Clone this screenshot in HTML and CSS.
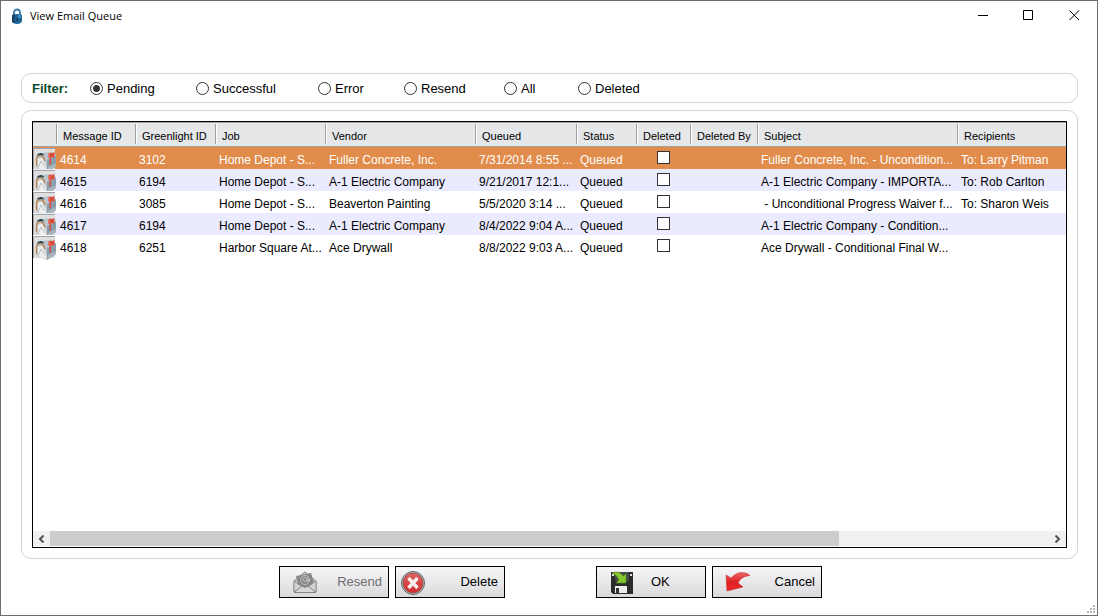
FILE: index.html
```
<!DOCTYPE html>
<html lang="en">
<head>
<meta charset="utf-8">
<title>View Email Queue</title>
<link rel="stylesheet" href="styles.css">
</head>
<body>
<svg class="defs" aria-hidden="true">
  <symbol id="mailbox" viewBox="0 0 24 26">
    <path d="M0 0H22V22H0Z" fill="#e0e0e1"/>
    <path d="M0.500 22V0.500H22" fill="none" stroke="#a3a3a6"/>
    <path d="M8 5L19 4L23 7V18L14 24L11 14Z" fill="#b9c6cf"/>
    <path d="M14 12L23 8V18L14 24Z" fill="#8b9dab"/>
    <path d="M15 19L23 15V18L14 24Z" fill="#a9b6c0"/>
    <path d="M3 9Q4 6 8 6Q12 7 13 11L14 24L3 20Z" fill="#c5cacd"/>
    <path d="M5 11L9 9.500L13 18V23L5 20Z" fill="#eceeef"/>
    <path d="M5 20L8 13L12 19" fill="none" stroke="#a9b2b8" stroke-width="0.800"/>
    <path d="M3.500 18V10.500Q4.500 7 8 7.500Q10.500 8.500 12 13" fill="none" stroke="#b98756" stroke-width="1.400"/>
    <path d="M3.500 7.500Q5 4.500 8.500 5Q10.500 5.500 11.500 7.500L8.500 7Q5.500 7 3.500 7.500Z" fill="#24465b"/>
    <path d="M15 6Q16.500 4 18.500 5Q20 5.500 21.500 3.500V9Q19.500 10 18 9V17L16.500 16V10L15 9Z" fill="#dc4a38"/>
    <path d="M15 6L17 5V9.500L15 9Z" fill="#e9705f"/>
  </symbol>
</svg>
<div class="window">
  <header class="titlebar">
    <svg class="lock" viewBox="0 0 12 16" aria-hidden="true">
      <path d="M3 8V4.500C3 0.500 9 0.500 9 4.500V8" fill="none" stroke="#3c7fa8" stroke-width="1.8"/>
      <path d="M1 7Q6 5 11 7V13Q10 16 6 16Q2 16 1 13Z" fill="#1e6598"/>
      <path d="M1 7Q3 6 4 6V15Q1 15 1 13Z" fill="#15476f"/>
      <path d="M7 7H10V10H7Z" fill="#498ebd"/>
      <path d="M5.500 10H7V13H5.500Z" fill="#0d3656"/>
    </svg>
    <h1 class="title">View Email Queue</h1>
    <button class="caption" aria-label="Minimize"><svg viewBox="0 0 11 11"><path d="M1 5.500H11" /></svg></button>
    <button class="caption" aria-label="Maximize"><svg viewBox="0 0 11 11"><path d="M0.500 0.500H9.500V9.500H0.500Z"/></svg></button>
    <button class="caption" aria-label="Close"><svg viewBox="0 0 11 11"><path d="M0.500 0.500L10 10M10 0.500L0.500 10"/></svg></button>
  </header>
  <main class="content">
    <div class="filter" role="radiogroup" aria-labelledby="filter-name">
      <span class="filter-name" id="filter-name">Filter:</span>
      <label class="option"><input type="radio" name="filter" checked><span>Pending</span></label>
      <label class="option"><input type="radio" name="filter"><span>Successful</span></label>
      <label class="option"><input type="radio" name="filter"><span>Error</span></label>
      <label class="option"><input type="radio" name="filter"><span>Resend</span></label>
      <label class="option"><input type="radio" name="filter"><span>All</span></label>
      <label class="option"><input type="radio" name="filter"><span>Deleted</span></label>
    </div>
    <section class="panel">
      <div class="list">
        <table class="queue">
          <colgroup>
            <col class="c-icon"><col class="c-message"><col class="c-greenlight"><col class="c-job"><col class="c-vendor"><col class="c-queued"><col class="c-status"><col class="c-deleted"><col class="c-by"><col class="c-subject"><col>
          </colgroup>
          <thead>
            <tr><th></th><th>Message ID</th><th>Greenlight ID</th><th>Job</th><th>Vendor</th><th>Queued</th><th>Status</th><th>Deleted</th><th>Deleted By</th><th>Subject</th><th>Recipients</th></tr>
          </thead>
          <tbody>
            <tr class="selected"><td class="pic"><div class="clip"><svg><use href="#mailbox"/></svg></div></td><td>4614</td><td>3102</td><td>Home Depot - S...</td><td>Fuller Concrete, Inc.</td><td>7/31/2014 8:55 ...</td><td>Queued</td><td class="tick"><input type="checkbox" aria-label="Deleted 4614"></td><td></td><td>Fuller Concrete, Inc. - Uncondition...</td><td>To: Larry Pitman</td></tr>
            <tr><td class="pic"><div class="clip"><svg><use href="#mailbox"/></svg></div></td><td>4615</td><td>6194</td><td>Home Depot - S...</td><td>A-1 Electric Company</td><td>9/21/2017 12:1...</td><td>Queued</td><td class="tick"><input type="checkbox" aria-label="Deleted 4615"></td><td></td><td>A-1 Electric Company - IMPORTA...</td><td>To: Rob Carlton</td></tr>
            <tr><td class="pic"><div class="clip"><svg><use href="#mailbox"/></svg></div></td><td>4616</td><td>3085</td><td>Home Depot - S...</td><td>Beaverton Painting</td><td>5/5/2020 3:14 ...</td><td>Queued</td><td class="tick"><input type="checkbox" aria-label="Deleted 4616"></td><td></td><td>&nbsp;- Unconditional Progress Waiver f...</td><td>To: Sharon Weis</td></tr>
            <tr><td class="pic"><div class="clip"><svg><use href="#mailbox"/></svg></div></td><td>4617</td><td>6194</td><td>Home Depot - S...</td><td>A-1 Electric Company</td><td>8/4/2022 9:04 A...</td><td>Queued</td><td class="tick"><input type="checkbox" aria-label="Deleted 4617"></td><td></td><td>A-1 Electric Company - Condition...</td><td></td></tr>
            <tr><td class="pic"><div class="clip"><svg><use href="#mailbox"/></svg></div></td><td>4618</td><td>6251</td><td>Harbor Square At...</td><td>Ace Drywall</td><td>8/8/2022 9:03 A...</td><td>Queued</td><td class="tick"><input type="checkbox" aria-label="Deleted 4618"></td><td></td><td>Ace Drywall - Conditional Final W...</td><td></td></tr>
          </tbody>
        </table>
        <div class="scrollbar">
          <button class="arrow" aria-label="Scroll left"><svg viewBox="0 0 7 8"><path d="M5.500 0.500L2 4L5.500 7.500"/></svg></button>
          <div class="track"><div class="thumb"></div></div>
          <button class="arrow" aria-label="Scroll right"><svg viewBox="0 0 7 8"><path d="M1.500 0.500L5 4L1.500 7.500"/></svg></button>
        </div>
      </div>
    </section>
  </main>
  <footer class="actions">
    <div class="pair">
      <button class="action" disabled>
        <svg viewBox="0 0 26 26" aria-hidden="true">
          <path d="M2 12L13 3L24 12V23H2Z" fill="#c7c7c7" stroke="#8a8a8a"/>
          <path d="M4 7L19 4L22 14L13 19L6 15Z" fill="#858585"/>
          <circle cx="13" cy="11" r="4.500" fill="none" stroke="#cfcfcf" stroke-width="0.800"/>
          <path d="M15 9V12Q17.500 13 17 10M15 11A2 2 0 1 1 15 10" fill="none" stroke="#dcdcdc" stroke-width="0.800"/>
          <path d="M2 12L10 18L2 23ZM24 12L16 18L24 23Z" fill="#d3d3d3" stroke="#929292"/>
          <path d="M2 23.500L10 17L13 18.500L16 17L24 23.500Z" fill="#d8d8d8" stroke="#858585"/>
        </svg>
        <span>Resend</span>
      </button>
      <button class="action tight">
        <svg viewBox="0 0 26 26" aria-hidden="true">
          <defs><linearGradient id="red" x2="0" y2="1"><stop stop-color="#dc6665"/><stop offset="1" stop-color="#d3292b"/></linearGradient></defs>
          <circle cx="13" cy="14" r="11.500" fill="#c1cbcc" stroke="#5b6668"/>
          <circle cx="13" cy="14" r="10" fill="url(#red)" stroke="#9d4a4a"/>
          <path d="M8.500 9L17.500 19M17.500 9L8.500 19" stroke="#f7eeee" stroke-width="3.400"/>
        </svg>
        <span>Delete</span>
      </button>
    </div>
    <div class="pair">
      <button class="action ok">
        <svg viewBox="0 0 26 26" aria-hidden="true">
          <path d="M1 3H23V25H3L1 23Z" fill="#2b2b2d"/>
          <path d="M5 3H19V12H5Z" fill="#47484a"/>
          <path d="M2 5H4V7H2ZM20 5H22V7H20Z" fill="#e5e5e5"/>
          <path d="M5 17H17V24H5Z" fill="#ededed"/>
          <path d="M6 19H9V24H6Z" fill="#333"/>
          <path d="M2 4Q9 1 13 7L16 5V14H6L9 11Q7 6 2 4Z" fill="#83c62e" stroke="#4c8b18" stroke-width="0.600"/>
        </svg>
        <span>OK</span>
      </button>
      <button class="action">
        <svg viewBox="0 0 26 26" aria-hidden="true">
          <defs><linearGradient id="arrow" x2="0" y2="1"><stop stop-color="#f06969"/><stop offset="0.500" stop-color="#df2026"/><stop offset="1" stop-color="#ea2629"/></linearGradient></defs>
          <path d="M1 6L6 9Q13 2 20 4Q23 4.500 25 6.500Q16 7 13 14L18 18L2 22Z" fill="url(#arrow)" stroke="#c52b30" stroke-width="0.600"/>
        </svg>
        <span>Cancel</span>
      </button>
    </div>
  </footer>
  <svg class="grip" viewBox="0 0 8 8" aria-hidden="true"><path d="M6 0H8V2H6ZM3 3H5V5H3ZM6 3H8V5H6ZM0 6H2V8H0ZM3 6H5V8H3ZM6 6H8V8H6Z"/></svg>
</div>
</body>
</html>
```

FILE: styles.css
```
* { box-sizing: border-box; }
body {
  margin: 0;
  font: 13px/16px "Liberation Sans", Arial, sans-serif;
  color: #000;
  background: #fff;
}
button { font: inherit; color: inherit; padding: 0; }
.defs { position: absolute; width: 0; height: 0; }
.window {
  position: relative;
  display: flex;
  flex-direction: column;
  min-height: 100vh;
  border: 1px solid #6e6e6e;
}
.titlebar { display: flex; align-items: center; height: 29px; padding-left: 10px; }
.lock { width: 12px; height: 16px; }
.title { flex: 1; margin: 0 0 0 7px; font: 11px/16px "Open Sans", "Segoe UI", sans-serif; }
.caption {
  display: grid;
  place-items: center;
  width: 46px;
  height: 29px;
  border: 0;
  background: none;
}
.caption svg { width: 11px; height: 11px; fill: none; stroke: #000; }

.content {
  flex: 1;
  display: flex;
  flex-direction: column;
  gap: 7px;
  padding: 43px 19px 0 20px;
}
.filter {
  display: grid;
  grid-template-columns: 58px 106px 122px 86px 100px 74px 1fr;
  align-items: center;
  height: 30px;
  padding-left: 10px;
  border: 1px solid #d3d3d3;
  border-radius: 10px;
}
.filter-name { padding-top: 2px; font-weight: bold; color: #0b4a2c; }
.option { display: flex; align-items: center; gap: 4px; }
.option span { padding-top: 2px; }
.option input {
  appearance: none;
  width: 13px;
  height: 13px;
  margin: 0;
  border: 1px solid #333;
  border-radius: 50%;
  background: #fff;
}
.option input:checked { background: radial-gradient(circle, #333 3px, #fff 4px); }

.panel {
  flex: 1;
  display: flex;
  padding: 10px;
  border: 1px solid #d3d3d3;
  border-radius: 10px;
}
.list {
  flex: 1;
  display: flex;
  flex-direction: column;
  justify-content: space-between;
  min-width: 0;
  border: 1px solid #000;
  overflow: hidden;
}
.queue { width: 100%; table-layout: fixed; border-collapse: separate; border-spacing: 0; }
.c-icon { width: 24px; }
.c-message { width: 79px; }
.c-greenlight { width: 80px; }
.c-job { width: 110px; }
.c-vendor { width: 150px; }
.c-queued { width: 101px; }
.c-status { width: 60px; }
.c-deleted { width: 54px; }
.c-by { width: 67px; }
.c-subject { width: 200px; }
.queue th {
  height: 25px;
  padding: 3px 0 0 6px;
  border-top: 1px solid #a5a5a5;
  border-bottom: 1px solid #a0a0a0;
  background: linear-gradient(#a0a0a0, #a0a0a0) right top 1px / 1px 20px no-repeat, #e5e7e9;
  font-size: 11px;
  font-weight: normal;
  text-align: left;
  white-space: nowrap;
}
.queue th + th {
  background: linear-gradient(#a0a0a0, #a0a0a0) right top 1px / 1px 20px no-repeat,
    linear-gradient(#fff, #fff) left top 1px / 1px 20px no-repeat, #e5e7e9;
}
.queue th:last-child { background: linear-gradient(#fff, #fff) left top 1px / 1px 20px no-repeat, #e5e7e9; }
.queue td {
  height: 22px;
  padding: 3px 0 0 3px;
  font-size: 12px;
  line-height: 19px;
  white-space: nowrap;
}
.queue td:not(.pic):not(.tick) { padding-top: 4px; line-height: 18px; }
.queue tbody tr:nth-child(even) { background: #ebebff; }
.queue tbody tr.selected { background: #e18c4b; color: #fff; }
.queue .pic { padding: 0; vertical-align: top; }
.clip { height: 22px; padding-top: 1px; overflow: hidden; }
.clip svg { display: block; width: 24px; height: 26px; }
.queue tr:last-child .clip { overflow: visible; }
.queue .tick { padding: 4px 0 0 20px; vertical-align: top; }
.tick input {
  display: block;
  appearance: none;
  width: 13px;
  height: 13px;
  margin: 0;
  border: 1px solid #333;
  background: #fff;
}
.scrollbar { display: flex; height: 16px; border-bottom: 1px solid #fff; background: #f0f0f0; }
.arrow { display: grid; place-items: center; width: 17px; border: 0; background: #f0f0f0; }
.arrow svg { width: 7px; height: 8px; fill: none; stroke: #505050; stroke-width: 2; }
.track { flex: 1; }
.thumb { width: 79%; height: 100%; background: #cdcdcd; }

.actions {
  display: flex;
  justify-content: center;
  gap: 91px;
  padding: 7px 17px 17px 20px;
}
.pair { display: flex; gap: 6px; }
.action {
  display: flex;
  align-items: center;
  justify-content: space-between;
  width: 110px;
  height: 32px;
  padding: 0 6px 0 12px;
  border: 1px solid #000;
  background: linear-gradient(#f6f6f8, #dadadd);
}
.action svg { width: 26px; height: 26px; }
.action.tight { padding-left: 4px; }
.action.ok { justify-content: flex-start; gap: 15px; padding-left: 13px; }
.action:disabled { color: #6d6d6d; }
.grip { position: absolute; right: 2px; bottom: 2px; width: 8px; height: 8px; fill: #b8b8b8; }
```
